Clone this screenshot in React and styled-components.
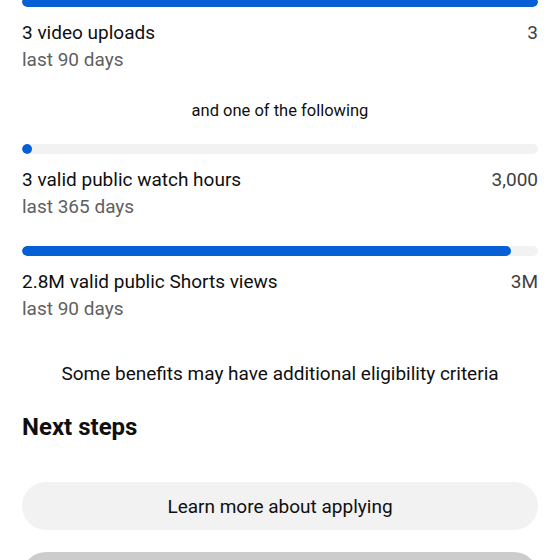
import styled, { createGlobalStyle } from 'styled-components';

const GlobalStyle = createGlobalStyle`
  body {
    margin: 0;
    background: #fff;
    font-family: Roboto, "Liberation Sans", sans-serif;
    color: #0f0f0f;
  }
`

const Page = styled.div`
  width: 560px;
  height: 560px;
  overflow: hidden;
  box-sizing: border-box;
  padding: 0 22px;
  display: flex;
  flex-direction: column;
  & > * {
    flex-shrink: 0;
  }
`

const Track = styled.div`
  height: 10px;
  border-radius: 5px;
  background: #f2f2f2;
  overflow: hidden;
  margin-top: ${(p) => p.$top}px;
`

const Fill = styled.div`
  height: 100%;
  min-width: 10px;
  border-radius: 5px;
  background: #065fd4;
`

const Row = styled.div`
  display: flex;
  justify-content: space-between;
  align-items: center;
  margin-top: 14px;
  height: 24px;
  font-size: 19px;
  line-height: 24px;
`

const Target = styled.span`
  color: #3f3f3f;
`

const Sub = styled.div`
  margin-top: 3px;
  height: 24px;
  font-size: 19px;
  line-height: 24px;
  color: #606060;
`

const Note = styled.div`
  text-align: center;
  font-size: ${(p) => p.$size}px;
  line-height: 22px;
  margin-top: ${(p) => p.$top}px;
`

const Heading = styled.h2`
  margin: 28px 0 0;
  font-size: 24px;
  line-height: 28px;
  font-weight: 700;
`

const Button = styled.button`
  display: block;
  width: 100%;
  height: 48px;
  border: none;
  border-radius: 24px;
  background: ${(p) => (p.$muted ? '#cccccc' : '#f2f2f2')};
  font-family: inherit;
  font-size: 19px;
  color: #0f0f0f;
  margin-top: ${(p) => p.$top}px;
`

const goals = [
  { label: '3 video uploads', target: '3', period: 'last 90 days', pct: 100 },
  { label: '3 valid public watch hours', target: '3,000', period: 'last 365 days', pct: 0 },
  { label: '2.8M valid public Shorts views', target: '3M', period: 'last 90 days', pct: 94.7 },
]

function Goal({ goal, top }) {
  return (
    <>
      <Track $top={top}>
        <Fill style={{ width: goal.pct + '%' }} />
      </Track>
      <Row>
        <span>{goal.label}</span>
        <Target>{goal.target}</Target>
      </Row>
      <Sub>{goal.period}</Sub>
    </>
  )
}

function App() {
  return (
    <>
      <GlobalStyle />
      <Page>
        <Goal goal={goals[0]} top={-3} />
        <Note $size={16.5} $top={28}>and one of the following</Note>
        <Goal goal={goals[1]} top={22} />
        <Goal goal={goals[2]} top={27} />
        <Note $size={19} $top={42}>Some benefits may have additional eligibility criteria</Note>
        <Heading>Next steps</Heading>
        <Button $top={41}>Learn more about applying</Button>
        <Button $muted $top={22} />
      </Page>
    </>
  )
}

export default App
